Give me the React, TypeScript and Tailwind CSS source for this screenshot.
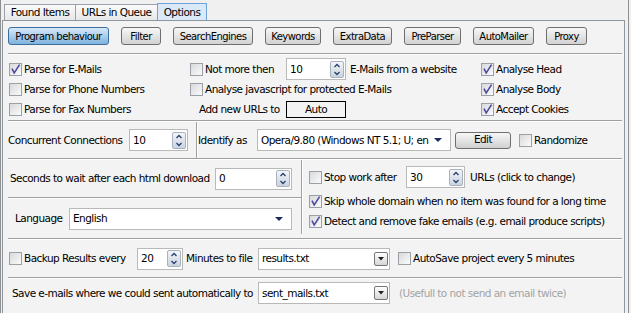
import React from "react";

function Sep({ className = "" }: { className?: string }) {
  return <div className={`h-[2px] shrink-0 border-t border-b border-t-[#a0a0a0] border-b-white ${className}`} />;
}

function VSep({ className = "" }: { className?: string }) {
  return <div className={`w-[2px] shrink-0 border-l border-r border-l-[#a0a0a0] border-r-white ${className}`} />;
}

function Check({ on = false, label, className = "" }: { on?: boolean; label: string; className?: string }) {
  return (
    <div className={`flex items-center whitespace-nowrap ${className}`}>
      <span className="relative h-[13px] w-[13px] shrink-0 border border-[#9ba0a6] bg-linear-to-br from-[#d8d9db] to-[#fbfbfb]">
        {on && (
          <svg viewBox="0 0 11 11" className="absolute inset-0 h-[11px] w-[11px]">
            <polyline points="2,4.6 4.2,9 9.6,0.6" fill="none" stroke="#4b4c9e" strokeWidth="1.6" />
          </svg>
        )}
      </span>
      <span className="ml-[2px]">{label}</span>
    </div>
  );
}

function Spin({ value, className = "" }: { value: string; className?: string }) {
  return (
    <div className={`flex h-[22px] shrink-0 items-center border border-[#b9b9b9] bg-white pl-[3px] pr-[1px] ${className}`}>
      <span className="flex-1">{value}</span>
      <svg width="14" height="17" viewBox="0 0 14 17">
        <defs>
          <linearGradient id="sp" x1="0" y1="0" x2="0" y2="1">
            <stop offset="0" stopColor="#f4f6f9" />
            <stop offset="1" stopColor="#c9d2dd" />
          </linearGradient>
        </defs>
        <rect x="0.5" y="0.5" width="13" height="16" rx="1.5" fill="url(#sp)" stroke="#a9b3bf" />
        <line x1="1" y1="8.5" x2="13" y2="8.5" stroke="#dde3ea" />
        <polyline points="4.5,6 7,3.5 9.5,6" fill="none" stroke="#273f70" strokeWidth="1.3" />
        <polyline points="4.5,11 7,13.5 9.5,11" fill="none" stroke="#273f70" strokeWidth="1.3" />
      </svg>
    </div>
  );
}

function Combo({ value, className = "", boxed = false }: { value: string; className?: string; boxed?: boolean }) {
  return (
    <div className={`flex h-[22px] shrink-0 items-center overflow-hidden border border-[#b9b9b9] bg-white pl-[3px] ${boxed ? "pr-[1px]" : "pr-[8px]"} ${className}`}>
      <span className="flex-1 overflow-hidden whitespace-nowrap">{value}</span>
      {boxed ? (
        <span className="flex h-[14px] w-[14px] items-center justify-center rounded-[2px] border border-[#767676] bg-linear-to-b from-white to-[#d6d6d6]">
          <svg width="6" height="4" viewBox="0 0 6 4">
            <polygon points="0,0 6,0 3,3.5" fill="#222" />
          </svg>
        </span>
      ) : (
        <svg width="8" height="4" viewBox="0 0 8 4" className="ml-[3px] shrink-0">
          <polygon points="0,0 8,0 4,4" fill="#1b2a63" />
        </svg>
      )}
    </div>
  );
}

const buttons = [
  { t: "Program behaviour", w: "w-[101px]", on: true },
  { t: "Filter", w: "w-[40px]" },
  { t: "SearchEngines", w: "w-[80px]" },
  { t: "Keywords", w: "w-[56px]" },
  { t: "ExtraData", w: "w-[59px]" },
  { t: "PreParser", w: "w-[57px]" },
  { t: "AutoMailer", w: "w-[61px]" },
  { t: "Proxy", w: "w-[41px]" },
];

export default function App() {
  return (
    <div className="h-[313px] w-[631px] overflow-hidden bg-[#f0f0f0] font-['DejaVu_Sans',sans-serif] text-[10.5px] leading-[13px] tracking-[-0.55px] text-black">
      <div className="h-full w-[629px] border-x border-[#8f8f8f] pl-[1px] pr-[3px]">
        {/* tabs */}
        <div className="flex h-[20px] items-end pl-[2px]">
          <div className="flex h-[16px] w-[71px] items-center justify-center border-l border-t border-[#9aa1a8] bg-linear-to-b from-[#fafafa] to-[#e8e8e8]">
            Found Items
          </div>
          <div className="flex h-[16px] w-[82px] items-center justify-center border-l border-t border-[#9aa1a8] bg-linear-to-b from-[#fafafa] to-[#e8e8e8]">
            URLs in Queue
          </div>
          <div className="flex h-[17px] w-[50px] items-center justify-center border-x border-t border-[#6fa3d6] bg-[#d9e9f8]">
            Options
          </div>
        </div>

        {/* sheet */}
        <div className="h-[293px] border-x border-t border-[#8e979f] bg-[#f3f3f3] pl-[5px] pr-[2px]">
          <div className="mt-[6px] flex h-[18px] gap-[12px] text-[10px]">
            {buttons.map((b) => (
              <div
                key={b.t}
                className={`flex h-[18px] items-center justify-center rounded-[3px] border ${b.w} ${
                  b.on
                    ? "border-[#3b6f9e] bg-linear-to-b from-[#d7e9f8] to-[#7fb2de]"
                    : "border-[#6f6f6f] bg-linear-to-b from-[#f7f7f7] to-[#d2d2d2]"
                }`}
              >
                {b.t}
              </div>
            ))}
          </div>

          <Sep className="mt-[8px]" />

          {/* options block */}
          <div className="grid h-[65px] grid-cols-[181px_291px_1fr] grid-rows-[20px_20px_20px] pl-[1px] pt-[4px]">
            <Check on label="Parse for E-Mails" />
            <div className="flex items-center">
              <Check label="Not more then" className="w-[96px]" />
              <Spin value="10" className="w-[60px]" />
              <span className="ml-[4px] whitespace-nowrap">E-Mails from a website</span>
            </div>
            <Check on label="Analyse Head" />

            <Check label="Parse for Phone Numbers" />
            <Check label="Analyse javascript for protected E-Mails" />
            <Check on label="Analyse Body" />

            <Check label="Parse for Fax Numbers" />
            <div className="flex items-center">
              <span className="w-[96px] whitespace-nowrap pl-[9px]">Add new URLs to</span>
              <div className="flex h-[17px] w-[60px] items-center justify-center border border-black">Auto</div>
            </div>
            <Check on label="Accept Cookies" />
          </div>

          <Sep />

          {/* connections */}
          <div className="flex h-[36px] items-center">
            <span className="w-[121px] whitespace-nowrap">Concurrent Connections</span>
            <Spin value="10" className="w-[59px]" />
            <VSep className="ml-[8px] self-stretch" />
            <span className="w-[59px] whitespace-nowrap">Identify as</span>
            <Combo value="Opera/9.80 (Windows NT 5.1; U; en" className="w-[194px]" />
            <div className="ml-[4px] flex h-[17px] w-[56px] items-center justify-center rounded-[3px] border border-[#6f6f6f] bg-linear-to-b from-[#f7f7f7] to-[#d0d0d0] pb-[2px]">
              Edit
            </div>
            <Check label="Randomize" className="ml-[8px]" />
          </div>

          <Sep />

          {/* download block */}
          <div className="flex h-[78px]">
            <div className="flex w-[293px] flex-col">
              <div className="flex h-[37px] items-center">
                <span className="w-[207px] whitespace-nowrap pl-[2px]">Seconds to wait after each html download</span>
                <Spin value="0" className="w-[77px]" />
              </div>
              <Sep />
              <div className="flex flex-1 items-center">
                <span className="w-[61px] pl-[7px]">Language</span>
                <Combo value="English" className="h-[21px] w-[223px]" />
              </div>
            </div>
            <VSep className="h-[74px]" />
            <div className="flex flex-1 flex-col pl-[6px] pt-[6px]">
              <div className="flex h-[22px] items-center">
                <Check label="Stop work after" className="w-[97px]" />
                <Spin value="30" className="w-[59px]" />
                <span className="ml-[5px] whitespace-nowrap">URLs (click to change)</span>
              </div>
              <Check on label="Skip whole domain when no item was found for a long time" className="mt-[3px] h-[20px]" />
              <Check on label="Detect and remove fake emails (e.g. email produce scripts)" className="h-[20px]" />
            </div>
          </div>

          <Sep />

          {/* backup */}
          <div className="flex h-[37px] items-center pl-[1px]">
            <Check label="Backup Results every" className="w-[128px]" />
            <Spin value="20" className="w-[46px]" />
            <span className="w-[75px] whitespace-nowrap pl-[3px]">Minutes to file</span>
            <Combo boxed value="results.txt" className="w-[132px]" />
            <Check label="AutoSave project every 5 minutes" className="ml-[8px]" />
          </div>

          <Sep />

          <div className="flex h-[28px] items-center">
            <span className="w-[250px] whitespace-nowrap pl-[4px]">Save e-mails where we could sent automatically to</span>
            <Combo boxed value="sent_mails.txt" className="w-[132px]" />
            <span className="ml-[9px] whitespace-nowrap text-[#a3a3a3]">(Usefull to not send an email twice)</span>
          </div>
        </div>
      </div>
    </div>
  );
}
